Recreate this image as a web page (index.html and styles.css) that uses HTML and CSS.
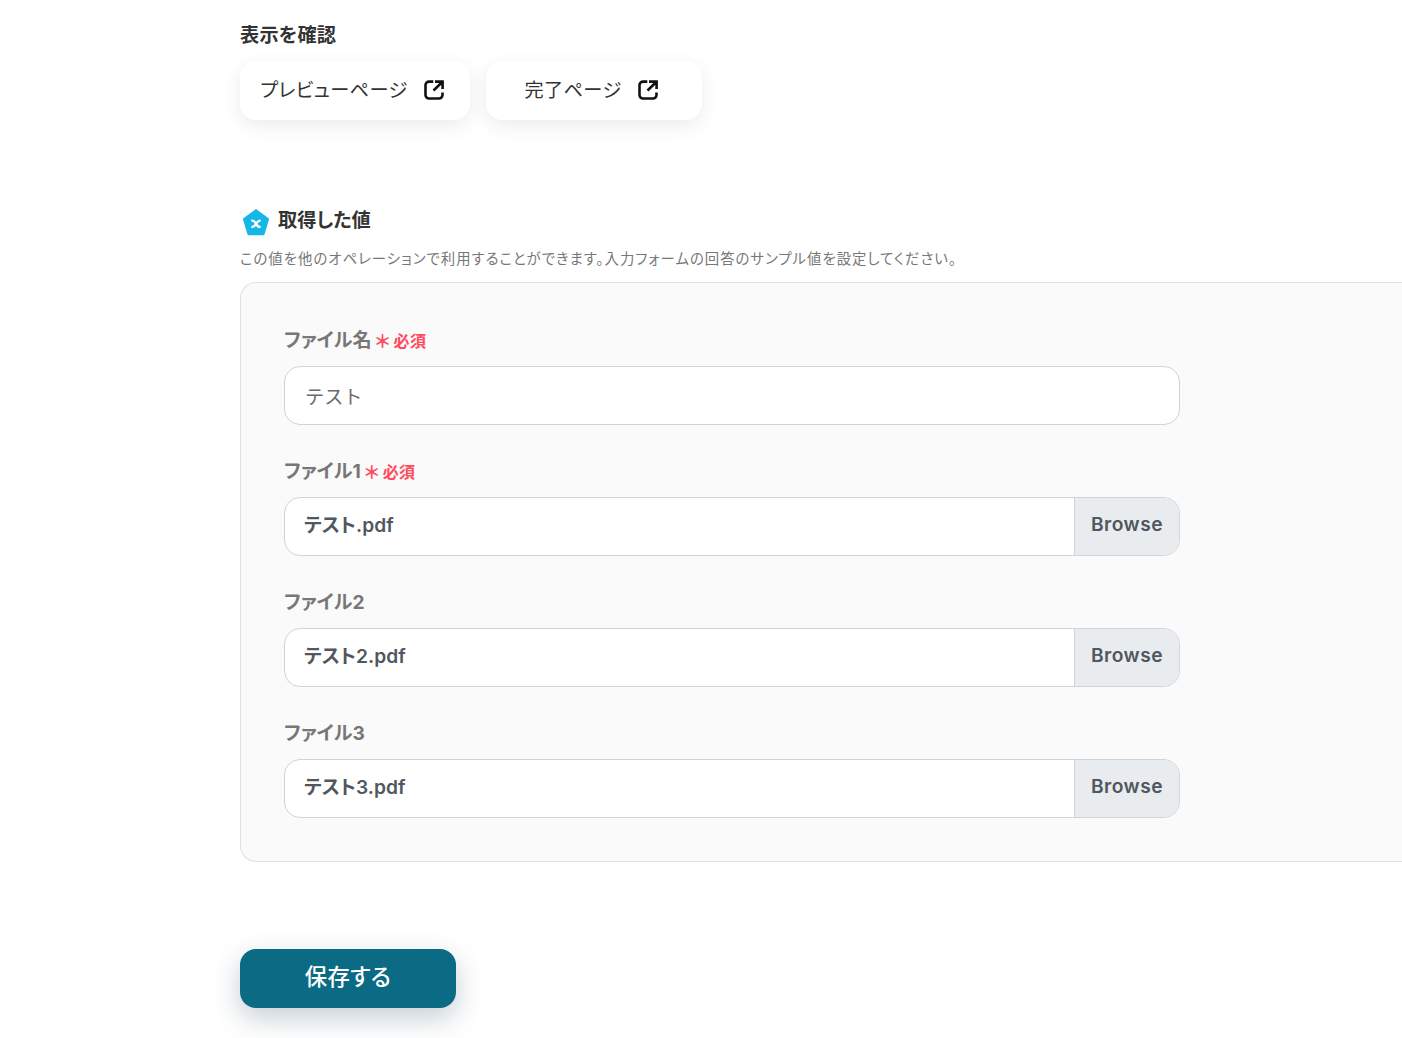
FILE: index.html
```html
<!DOCTYPE html>
<html lang="ja">
<head>
<meta charset="utf-8">
<title>表示を確認</title>
<link rel="stylesheet" href="styles.css">
</head>
<body>
<main class="page">
  <h2 class="title">表示を確認</h2>
  <div class="links">
    <a class="link link-preview"><span class="link-text">プレビューページ</span>
      <svg class="ext" viewBox="0 0 20 20" fill="none" stroke="currentColor" stroke-width="2.600"><path d="M9.300 1.600H5A3.500 3.500 0 0 0 1.500 5.100V15A3.500 3.500 0 0 0 5 18.500H15A3.500 3.500 0 0 0 18.500 15V12.500"/><path d="M9.500 10.500 18 2.200M11 1.600h7.600V9"/></svg>
    </a>
    <a class="link link-done"><span class="link-text">完了ページ</span>
      <svg class="ext" viewBox="0 0 20 20" fill="none" stroke="currentColor" stroke-width="2.600"><path d="M9.300 1.600H5A3.500 3.500 0 0 0 1.500 5.100V15A3.500 3.500 0 0 0 5 18.500H15A3.500 3.500 0 0 0 18.500 15V12.500"/><path d="M9.500 10.500 18 2.200M11 1.600h7.600V9"/></svg>
    </a>
  </div>

  <div class="section-head">
    <svg class="penta" viewBox="0 0 28 28"><path d="M14 1 26.300 10a1.500 1.500 0 0 1 .6 1.700L22.600 26.300a1.500 1.500 0 0 1-1.400 1H6.800a1.500 1.500 0 0 1-1.400-1L1.100 11.700a1.500 1.500 0 0 1 .6-1.700Z" fill="#14b8e6"/><path d="M10.200 12.700c2.200 0 2.800 1.200 3.800 3.100s1.600 3.100 3.800 3.100M17.800 12.700c-1.600 0-2.800 1.600-3.800 3.100s-2.200 3.100-3.800 3.100" stroke="#fff" stroke-width="2.300" fill="none" stroke-linecap="round"/></svg>
    <h3 class="section-title">取得した値</h3>
  </div>
  <p class="desc">この値を他のオペレーションで利用することができます。入力フォームの回答のサンプル値を設定してください。</p>

  <section class="card">
    <div class="field">
      <label class="label">ファイル名<span class="req"><span class="star">＊</span>必須</span></label>
      <div class="input text">テスト</div>
    </div>
    <div class="field">
      <label class="label">ファイル1<span class="req"><span class="star">＊</span>必須</span></label>
      <div class="input file"><span class="name">テスト.pdf</span><span class="browse">Browse</span></div>
    </div>
    <div class="field">
      <label class="label">ファイル2</label>
      <div class="input file"><span class="name">テスト2.pdf</span><span class="browse">Browse</span></div>
    </div>
    <div class="field">
      <label class="label">ファイル3</label>
      <div class="input file"><span class="name">テスト3.pdf</span><span class="browse">Browse</span></div>
    </div>
  </section>

  <button class="save"><span class="save-text">保存する</span></button>
</main>
</body>
</html>
```
FILE: styles.css
```css
* { box-sizing: border-box; }
html, body { margin: 0; padding: 0; background: #fff; }
body {
  width: 1402px;
  height: 1038px;
  overflow: hidden;
  font-family: Inter, "Noto Sans CJK JP", sans-serif;
  font-feature-settings: "palt";
  color: #2b2b2b;
}
.page { padding: 23px 0 0 240px; }
.title { margin: 0; font-size: 19.200px; line-height: 24px; font-weight: 700; color: #333; letter-spacing: .2px; }
.links { display: flex; gap: 16px; margin-top: 14px; }
.link {
  height: 59px;
  display: flex;
  align-items: center;
  justify-content: center;
  gap: 16px;
  padding-right: 6px;
  background: #fff;
  border-radius: 16px;
  box-shadow: 0 6px 20px rgba(0, 0, 0, .08);
  font-size: 19.200px;
  color: #333;
}
.link-text { margin-bottom: 4px; letter-spacing: .4px; }
.link-preview { width: 230px; }
.link-done { width: 216px; }
.ext { width: 20px; height: 20px; color: #111; flex: none; margin-bottom: 1px; }
.section-head { display: flex; align-items: center; gap: 8px; margin-top: 86px; padding-left: 2px; height: 28px; }
.penta { width: 28px; height: 28px; flex: none; margin-top: 3px; }
.section-title { margin: 0; font-size: 19.200px; line-height: 24px; font-weight: 700; color: #333; }
.desc { margin: 15px 0 0; font-size: 14.400px; line-height: 20px; color: #777; letter-spacing: 1px; }
.card {
  margin-top: 13px;
  height: 580px;
  padding: 44px 0 0 43px;
  background: #fafafa;
  border: 1px solid #e0e0e6;
  border-right: 0;
  border-radius: 16px 0 0 16px;
}
.field { width: 896px; margin-bottom: 33px; }
.label { display: flex; align-items: center; height: 28px; font-size: 19.200px; font-weight: 700; color: #777; margin-bottom: 13px; margin-top: -2px; }
.req { display: inline-flex; align-items: center; margin-left: 4px; padding-top: 2px; font-size: 16px; letter-spacing: .4px; color: #ff4b5c; font-weight: 700; }
.star { width: 14px; margin: 0 6px 0 -2px; padding-top: 3px; font-size: 18px; line-height: 1; font-feature-settings: normal; text-align: center; }
.input {
  height: 59px;
  display: flex;
  align-items: center;
  background: #fff;
  border: 1px solid #ced4da;
  border-radius: 16px;
  overflow: hidden;
  font-size: 19.200px;
}
.text { padding-left: 20px; color: #6b6b6b; font-feature-settings: normal; }
.file { font-weight: 600; color: #50575e; }
.name { flex: 1; padding-left: 19px; padding-bottom: 5px; letter-spacing: .05px; }
.browse {
  width: 105px;
  height: 100%;
  display: flex;
  align-items: center;
  justify-content: center;
  padding-bottom: 5px;
  background: #e9ecef;
  border-left: 1px solid #ced4da;
  letter-spacing: .5px;
}
.save {
  display: block;
  margin-top: 87px;
  width: 216px;
  height: 59px;
  padding: 0;
  border: 0;
  border-radius: 16px;
  background: #0b6a84;
  color: #fff;
  font: 500 22.400px Inter, "Noto Sans CJK JP", sans-serif;
  font-feature-settings: "palt";
  letter-spacing: .3px;
  box-shadow: 0 10px 28px rgba(11, 50, 70, .24);
}
.save-text { display: block; margin-bottom: 8px; }
```
